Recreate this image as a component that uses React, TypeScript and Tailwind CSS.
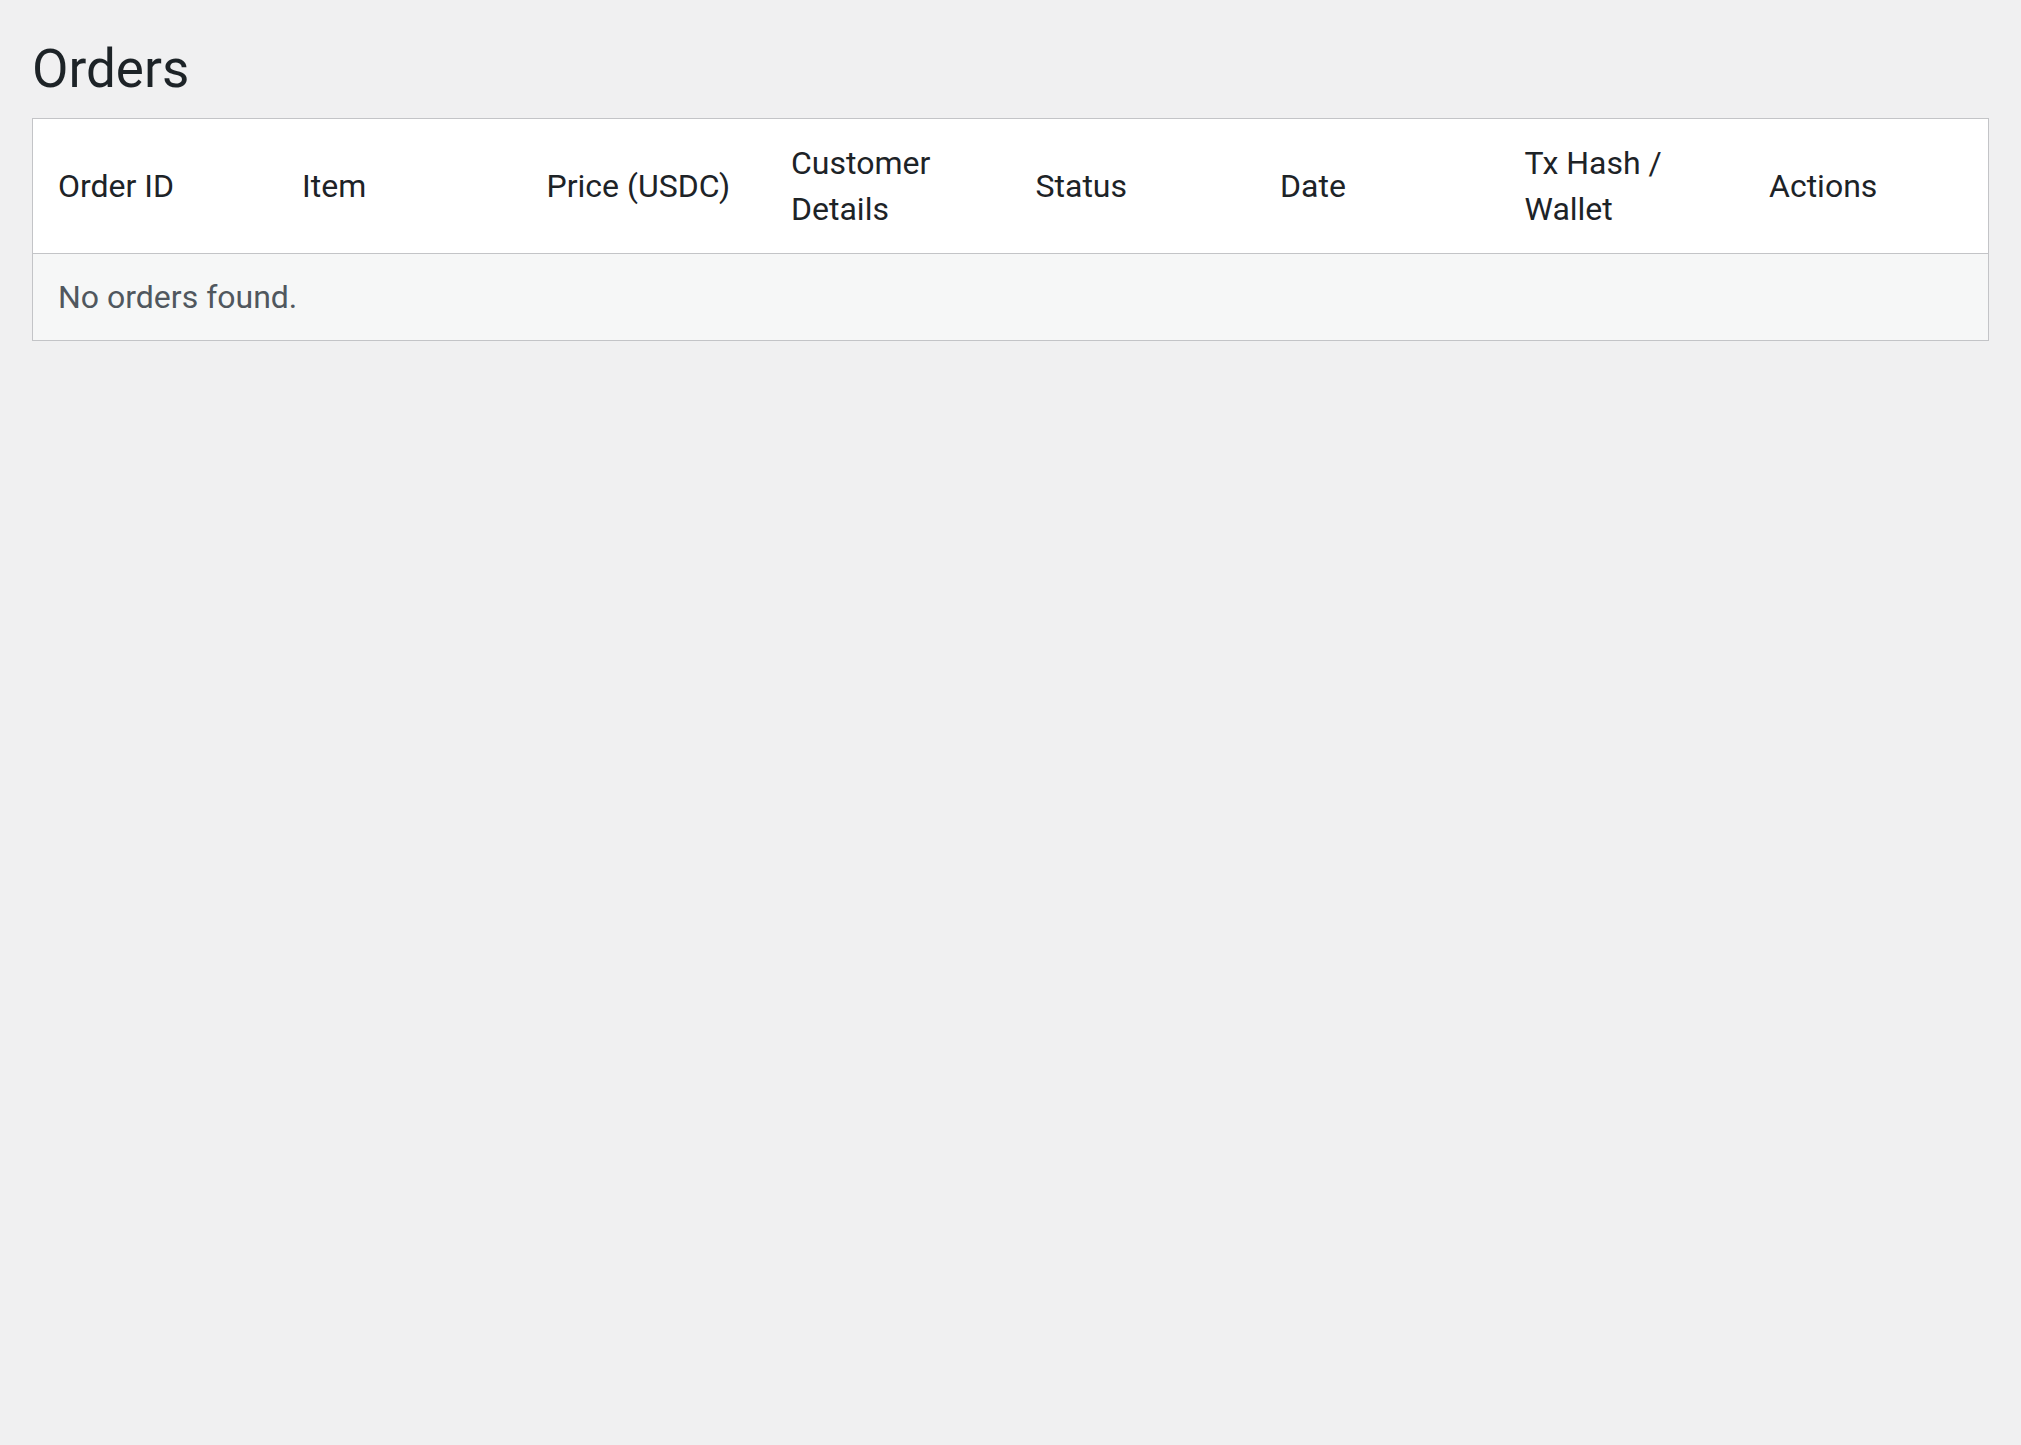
export default function App() {
  const cols = ["Order ID", "Item", "Price (USDC)", "Customer Details", "Status", "Date", "Tx Hash / Wallet", "Actions"];
  return (
    <div className="min-h-[1445px] w-full bg-[#f0f0f1] px-[32px] pt-[35px]" style={{ fontFamily: "Roboto, 'Noto Sans', sans-serif" }}>
      <h1 className="text-[53px] leading-[69px] font-normal text-[#1d2327] mb-[14px]">Orders</h1>
      <table className="w-full table-fixed border border-[#c3c4c7] border-collapse">
        <thead>
          <tr className="bg-white h-[135px] border-b border-[#c3c4c7]">
            {cols.map((c) => (
              <th key={c} className="text-left font-normal text-[32px] leading-[46.5px] text-[#1d2327] pl-[25px] pr-[16px] align-middle">
                {c}
              </th>
            ))}
          </tr>
        </thead>
        <tbody>
          <tr className="bg-[#f6f7f7] h-[87px]">
            <td colSpan={8} className="pl-[25px] text-[32px] text-[#50575e] align-middle">No orders found.</td>
          </tr>
        </tbody>
      </table>
    </div>
  );
}
